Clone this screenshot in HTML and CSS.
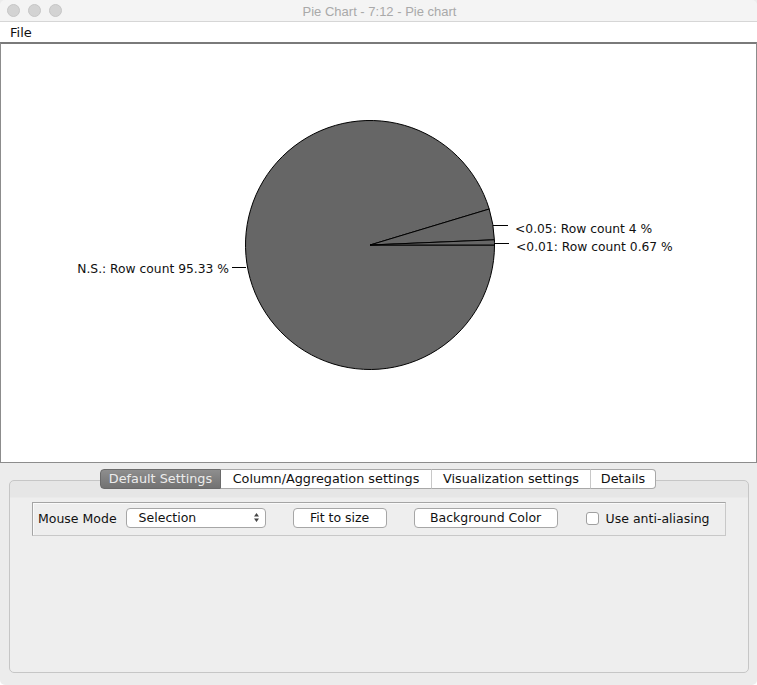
FILE: index.html
```html
<!DOCTYPE html>
<html>
<head>
<meta charset="utf-8">
<link rel="stylesheet" href="styles.css">
</head>
<body>
<div class="window">
  <div class="titlebar">
    <div class="lights"><span class="light"></span><span class="light"></span><span class="light"></span></div>
    <div class="title">Pie Chart - 7:12 - Pie chart</div>
  </div>
  <div class="menubar"><span class="menu">File</span></div>
  <div class="chart">
    <svg class="pie" width="755" height="418" viewBox="0 0 755 418">
      <g fill="#666666" stroke="#000" stroke-width="1">
        <path d="M369,201 L488.19,165.02 A124.5,124.5 0 1 0 493.5,201 Z"/>
        <path d="M369,201 L493.39,195.79 A124.5,124.5 0 0 0 488.19,165.02 Z"/>
        <path d="M369,201 L493.5,201 A124.5,124.5 0 0 0 493.39,195.79 Z"/>
      </g>
      <g stroke="#000" stroke-width="1">
        <line x1="492" y1="181.5" x2="507" y2="181.5"/>
        <line x1="493" y1="199.5" x2="508" y2="199.5"/>
        <line x1="231" y1="223.5" x2="245" y2="223.5"/>
      </g>
      <g class="lbl">
        <text x="514" y="189">&lt;0.05: Row count 4 %</text>
        <text x="515" y="207">&lt;0.01: Row count 0.67 %</text>
        <text x="228" y="229" text-anchor="end">N.S.: Row count 95.33 %</text>
      </g>
    </svg>
  </div>
  <div class="bottom">
    <div class="tabs">
      <div class="tab active">Default Settings</div>
      <div class="tab t2">Column/Aggregation settings</div>
      <div class="tab t3">Visualization settings</div>
      <div class="tab last">Details</div>
    </div>
    <div class="panel">
      <div class="toolbar">
        <span class="lab">Mouse Mode</span>
        <div class="combo"><span>Selection</span>
          <svg class="arrows" width="7" height="11" viewBox="0 0 7 11"><path d="M3.5,1 L6,4.5 L1,4.5 Z M3.5,10 L6,6.5 L1,6.5 Z" fill="#444"/></svg>
        </div>
        <div class="btn fit">Fit to size</div>
        <div class="btn bg">Background Color</div>
        <label class="check"><span class="box"></span><span>Use anti-aliasing</span></label>
      </div>
    </div>
  </div>
</div>
</body>
</html>
```
FILE: styles.css
```css
html, body { margin: 0; padding: 0; }
body { background: #fff; font-family: "DejaVu Sans", sans-serif; }
.window {
  width: 757px; height: 685px; background: #ececec;
  display: flex; flex-direction: column; overflow: hidden;
  border-radius: 0 0 5px 5px;
}
.titlebar {
  height: 21px; background: #f4f4f4; border-bottom: 1px solid #d6d6d6;
  display: flex; align-items: center; position: relative;
  border-radius: 5px 5px 0 0;
}
.lights { display: flex; gap: 8px; padding-left: 7px; }
.light {
  width: 11px; height: 11px; border-radius: 50%;
  background: #d3d3d3; border: 0.5px solid #c6c6c6;
}
.title {
  flex: 1; text-align: center; margin-left: -60px; margin-top: 1px;
  font-family: "Liberation Sans", Arial, sans-serif; font-size: 13px; color: #a9a9a9;
}
.menubar {
  height: 20px; background: #fff; display: flex; align-items: center;
}
.menu { padding-left: 10px; font-size: 13px; color: #111; margin-top: 1px; }
.chart {
  height: 418px; background: #fff;
  border: 1px solid #8c8c8c; border-top: 2px solid #7a7a7a;
}
.pie { display: block; }
.lbl text { font-family: "DejaVu Sans", sans-serif; font-size: 12.3px; fill: #111; }
.bottom { flex: 1; display: flex; flex-direction: column; }
.tabs {
  display: flex; margin: 6px 0 0 100px; height: 20px; position: relative; z-index: 1;
  font-size: 12.8px;
}
.tab {
  box-sizing: border-box; height: 20px; background: #fff;
  border-top: 1px solid #a8a8a8; border-bottom: 1px solid #a8a8a8;
  border-right: 1px solid #c8c8c8; padding-bottom: 1px;
  display: flex; align-items: center; justify-content: center; color: #111;
}
.tab.active {
  width: 121px; border: 1px solid #6a6a6a; border-radius: 4px 0 0 4px;
  background: linear-gradient(#8e8e8e, #727272); color: #ececec;
}
.tab.t2 { width: 211px; }
.tab.t3 { width: 159px; }
.tab.last { width: 65px; border-right: 1px solid #a8a8a8; border-radius: 0 4px 4px 0; }
.panel {
  margin: -9px 0 0 9px; width: 740px; height: 193px; box-sizing: border-box;
  border: 1px solid #c6c6c6; border-radius: 5px;
  background: linear-gradient(#e6e6e6 0, #e6e6e6 16px, #eeeeee 17px);
  padding: 21px 0 0 22px;
}
.toolbar {
  width: 694px; height: 34px; box-sizing: border-box;
  border: 1px solid #a4a4a4; border-right-color: #c8c8c8; border-bottom-color: #c8c8c8;
  box-shadow: inset 1px 1px 0 #fafafa; padding-bottom: 2px;
  display: flex; align-items: center; font-size: 12.5px; color: #111;
}
.lab { margin-left: 5px; margin-top: 1px; }
.combo {
  margin-left: 9px; width: 140px; height: 20px; box-sizing: border-box;
  background: #fff; border: 1px solid #a6a6a6; border-radius: 4px;
  display: flex; align-items: center; justify-content: space-between;
  padding: 0 5px 1px 12px;
}
.btn {
  height: 20px; box-sizing: border-box; background: #fff;
  border: 1px solid #a6a6a6; border-radius: 4px; padding-bottom: 1px;
  display: flex; align-items: center; justify-content: center;
}
.fit { margin-left: 27px; width: 94px; }
.bg { margin-left: 27px; width: 144px; }
.check { margin-left: 28px; display: flex; align-items: center; gap: 7px; margin-top: 1px; }
.box {
  width: 13px; height: 13px; box-sizing: border-box; background: #fff;
  border: 1px solid #a0a0a0; border-radius: 3px;
}
```
